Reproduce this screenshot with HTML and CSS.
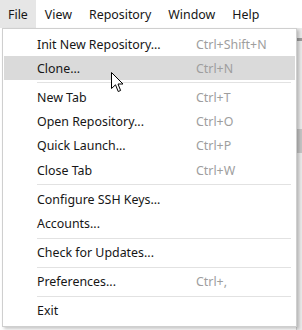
FILE: index.html
```html
<!DOCTYPE html>
<html>
<head>
<meta charset="utf-8">
<link rel="stylesheet" href="styles.css">
</head>
<body>
<div class="app">
  <nav class="menubar">
    <span class="mb-item active">File</span>
    <span class="mb-item">View</span>
    <span class="mb-item">Repository</span>
    <span class="mb-item">Window</span>
    <span class="mb-item">Help</span>
  </nav>
  <div class="workspace">
    <div class="spacer"></div>
    <div class="edge"><div class="edge-tick"></div><div class="edge-thumb"></div></div>
  </div>
  <div class="menu">
    <div class="mi"><span class="lbl">Init New Repository...</span><span class="sc">Ctrl+Shift+N</span></div>
    <div class="mi hover"><span class="lbl">Clone...</span><span class="sc">Ctrl+N</span></div>
    <div class="sep"></div>
    <div class="mi"><span class="lbl">New Tab</span><span class="sc">Ctrl+T</span></div>
    <div class="mi"><span class="lbl">Open Repository...</span><span class="sc">Ctrl+O</span></div>
    <div class="mi"><span class="lbl">Quick Launch...</span><span class="sc">Ctrl+P</span></div>
    <div class="mi"><span class="lbl">Close Tab</span><span class="sc">Ctrl+W</span></div>
    <div class="sep"></div>
    <div class="mi"><span class="lbl">Configure SSH Keys...</span><span class="sc"></span></div>
    <div class="mi"><span class="lbl">Accounts...</span><span class="sc"></span></div>
    <div class="sep"></div>
    <div class="mi"><span class="lbl">Check for Updates...</span><span class="sc"></span></div>
    <div class="sep"></div>
    <div class="mi"><span class="lbl">Preferences...</span><span class="sc">Ctrl+,</span></div>
    <div class="sep"></div>
    <div class="mi"><span class="lbl">Exit</span><span class="sc"></span></div>
  </div>
  <svg class="cursor" width="13" height="21" viewBox="0 0 13 21">
    <path d="M0.5 0.5 L0.5 16.5 L4.5 12.8 L7.2 19.5 L9.6 18.5 L7 12 L12 12 Z" fill="#fff" stroke="#000" stroke-width="1" stroke-linejoin="miter"/>
  </svg>
</div>
</body>
</html>
```
FILE: styles.css
```css
html, body {
  margin: 0;
  padding: 0;
  background: #fff;
}
.app {
  position: relative;
  width: 302px;
  height: 330px;
  overflow: hidden;
  font-family: "Noto Sans", "Open Sans", sans-serif;
  font-size: 12.4px;
  color: #161616;
  display: flex;
  flex-direction: column;
}
.menubar {
  display: flex;
  height: 28px;
  align-items: stretch;
  background: #fff;
}
.mb-item {
  display: flex;
  align-items: center;
  padding: 0 8px;
  margin-right: 1px;
}
.mb-item.active {
  background: #e6e6e6;
}
.workspace {
  flex: 1;
  display: flex;
}
.spacer {
  flex: 1;
}
.edge {
  width: 5px;
  background: #e9e9e9;
  border-left: 1px solid #d0d0d0;
  display: flex;
  flex-direction: column;
}
.edge-tick {
  height: 3px;
  margin-top: 10px;
  background: #9a9a9a;
}
.edge-thumb {
  height: 24px;
  margin-top: 88px;
  background: #c4c4c4;
}
.menu {
  position: absolute;
  left: 2px;
  top: 28px;
  width: 293px;
  padding: 3px 0 3px;
  background: #fff;
  border: 1px solid #cfcfcf;
  box-shadow: 2px 2px 3px rgba(0, 0, 0, 0.22);
}
.mi {
  display: grid;
  grid-template-columns: 159px 1fr;
  align-items: center;
  height: 24.2px;
  padding-left: 33px;
  margin: 0 1px;
}
.mi.hover {
  background: #dadada;
}
.sc {
  color: #9e9e9e;
}
.sep {
  height: 1px;
  margin: 2px 5px 2px 34px;
  background: #e2e2e2;
}
.cursor {
  position: absolute;
  left: 111px;
  top: 72px;
}
```
